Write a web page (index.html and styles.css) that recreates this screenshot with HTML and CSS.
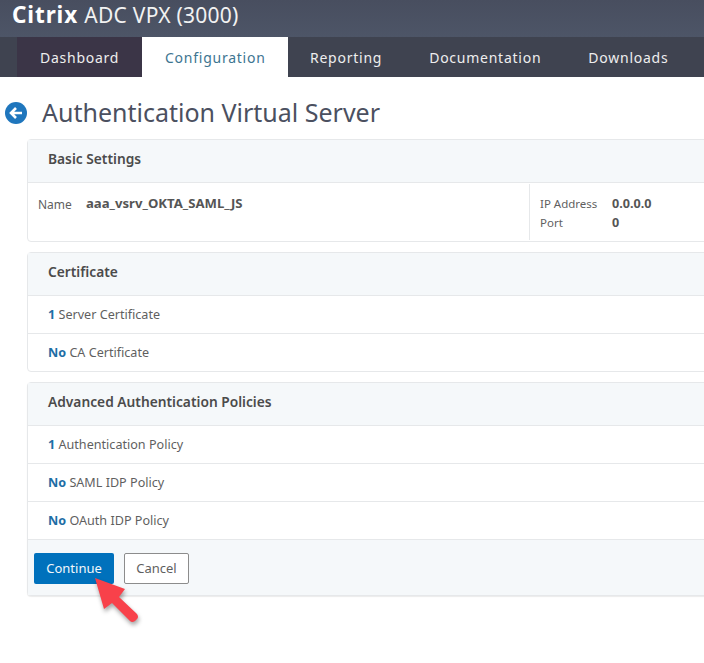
FILE: index.html
```html
<!DOCTYPE html>
<html lang="en">
<head>
<meta charset="UTF-8">
<meta name="viewport" content="width=device-width, initial-scale=1.0">
<title>Authentication Virtual Server</title>
<link rel="stylesheet" href="styles.css">
</head>
<body>

<!-- Top bar -->
<header class="top-bar">
  <span class="brand">Citrix</span> <span class="product">ADC VPX (3000)</span>
</header>

<!-- Main navigation -->
<nav class="main-nav">
  <a class="nav-tab nav-dashboard">Dashboard</a>
  <a class="nav-tab nav-active">Configuration</a>
  <a class="nav-tab nav-reporting">Reporting</a>
  <a class="nav-tab nav-docs">Documentation</a>
  <a class="nav-tab nav-downloads">Downloads</a>
</nav>

<div class="page-title">
  <svg class="back-icon" width="22" height="22" viewBox="0 0 22 22">
    <circle cx="11" cy="11" r="11" fill="#1f76bd"/>
    <path d="M17 11H6.5M11 6L6 11l5 5" fill="none" stroke="#fff" stroke-width="2.6"/>
  </svg>
  <h1>Authentication Virtual Server</h1>
</div>

<main class="content">

  <section class="panel">
    <h2 class="panel-head">Basic Settings</h2>
    <div class="basic-body">
      <div class="basic-left">
        <span class="field-label">Name</span>
        <span class="field-value">aaa_vsrv_OKTA_SAML_JS</span>
      </div>
      <div class="basic-right">
        <span class="field-label">IP Address</span>
        <span class="field-value">0.0.0.0</span>
        <span class="field-label">Port</span>
        <span class="field-value">0</span>
      </div>
    </div>
  </section>

  <section class="panel">
    <h2 class="panel-head">Certificate</h2>
    <div class="panel-row"><b>1</b> Server Certificate</div>
    <div class="panel-row"><b>No</b> CA Certificate</div>
  </section>

  <section class="panel panel-last">
    <h2 class="panel-head">Advanced Authentication Policies</h2>
    <div class="panel-row"><b>1</b> Authentication Policy</div>
    <div class="panel-row"><b>No</b> SAML IDP Policy</div>
    <div class="panel-row"><b>No</b> OAuth IDP Policy</div>
    <div class="panel-foot">
      <button class="btn btn-primary">Continue</button>
      <button class="btn btn-cancel">Cancel</button>
    </div>
  </section>

</main>

<!-- Red annotation arrow -->
<svg class="callout-arrow" width="60" height="60" viewBox="0 0 60 60">
  <path d="M4 2L34 13 28 21 46 38Q48 41 46 43L44 45Q41 47 39 45L21 27 13 33Z" fill="#f8414a"/>
</svg>

</body>
</html>
```

FILE: styles.css
```css
body {
  font-family: "Noto Sans", "Open Sans", sans-serif;
  margin: 0;
  padding: 0;
  height: 663px;
  position: relative;
  overflow: hidden;
  background-color: #fff;
  color: #5f5f5f;
}

/* Top bar */
.top-bar {
  height: 37px;
  box-sizing: border-box;
  padding-left: 12px;
  line-height: 30px;
  background: linear-gradient(#484e5f, #4d5567);
  color: #f2f2f2;
  white-space: nowrap;
}

.brand {
  font-size: 22.5px;
  font-weight: 700;
  letter-spacing: 0.9px;
  color: #fff;
}

.product {
  margin-left: 2px;
  font-size: 21px;
  letter-spacing: 0.25px;
}

/* Main navigation */
.main-nav {
  display: flex;
  height: 40px;
  padding-left: 17px;
  background-color: #3f4350;
}

.nav-tab {
  display: block;
  font-size: 14px;
  line-height: 42px;
  letter-spacing: 0.75px;
  color: #eeeeee;
  white-space: nowrap;
}

.nav-dashboard {
  width: 125px;
  box-sizing: border-box;
  padding-left: 23px;
  background-color: #3b3547;
}

.nav-active {
  width: 146px;
  box-sizing: border-box;
  padding-left: 23px;
  background-color: #fff;
  color: #3d7591;
}

.nav-reporting {
  margin-left: 22px;
}

.nav-docs {
  margin-left: 47px;
}

.nav-downloads {
  margin-left: 47px;
}

/* Page title */
.page-title {
  display: flex;
  align-items: center;
  height: 62px;
  box-sizing: border-box;
  padding: 8px 0 0 5px;
}

.back-icon {
  flex: none;
  margin-right: 15px;
  margin-top: 2px;
}

.page-title h1 {
  margin: 0;
  font-size: 25px;
  font-weight: 400;
  color: #4b5060;
  white-space: nowrap;
}

/* Panels */
.content {
  display: flex;
  flex-direction: column;
  gap: 10px;
  margin-left: 27px;
  margin-right: -12px;
}

.panel {
  border: 1px solid #e6e8ea;
  border-radius: 4px;
  background-color: #fff;
}

.panel-last {
  box-shadow: 0 1px 1px rgba(0, 0, 0, 0.08);
}

.panel-head {
  margin: 0;
  height: 43px;
  box-sizing: border-box;
  padding-left: 20px;
  font-size: 13.75px;
  font-weight: 600;
  line-height: 38px;
  color: #4b4b4b;
  background-color: #f5f8fa;
  border-bottom: 1px solid #e6e8ea;
}

.panel-row {
  height: 38px;
  box-sizing: border-box;
  padding-left: 20px;
  font-size: 12.6px;
  line-height: 37px;
  border-bottom: 1px solid #e6e8ea;
}

.panel .panel-row:nth-last-child(1) {
  height: 37px;
  border-bottom: none;
}

.panel-row b {
  font-weight: 700;
  color: #1e6ea5;
}

/* Basic settings body */
.basic-body {
  display: flex;
  height: 58px;
  font-size: 12px;
}

.basic-left {
  display: flex;
  width: 501px;
  box-sizing: border-box;
  padding: 13px 0 0 10px;
  line-height: 18px;
}

.basic-left .field-label {
  width: 48px;
}

.basic-left .field-value {
  margin-top: -2px;
  font-size: 13.15px;
}

.basic-right {
  display: grid;
  grid-template-columns: 72px auto;
  grid-auto-rows: 19px;
  align-content: start;
  padding: 11px 0 0 10px;
  margin-top: 1px;
  margin-bottom: 1px;
  border-left: 1px solid #e6e8ea;
  line-height: 18px;
}

.basic-right .field-label {
  font-size: 11.5px;
}

.basic-right .field-value {
  font-size: 12.6px;
}

.field-value {
  font-weight: 700;
  color: #555;
}

/* Footer with buttons */
.panel-foot {
  display: flex;
  gap: 10px;
  height: 55px;
  box-sizing: border-box;
  padding: 13px 0 0 6px;
  background-color: #f5f8fa;
}

.btn {
  height: 31px;
  box-sizing: border-box;
  padding: 0 0 2px;
  font-family: inherit;
  font-size: 13px;
  border-radius: 2px;
}

.btn-primary {
  width: 80px;
  background-color: #0071bc;
  border: none;
  color: #f2f7fb;
}

.btn-cancel {
  width: 65px;
  background-color: #fff;
  border: 1px solid #8c8c8c;
  color: #5f5f5f;
}

/* Annotation over the Continue button */
.callout-arrow {
  position: absolute;
  left: 91px;
  top: 576px;
  filter: drop-shadow(1px 3px 2px rgba(0, 0, 0, 0.35));
}
```
